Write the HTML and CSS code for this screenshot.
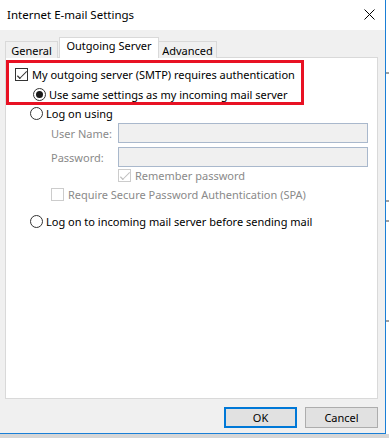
FILE: index.html
```html
<!DOCTYPE html>
<html lang="en">
  <head>
    <meta charset="UTF-8" />
    <title>Internet E-mail Settings</title>
    <link rel="stylesheet" href="styles.css">
  </head>
  <body>
    <div class="screen">
      <div class="dialog">
        <div class="titlebar">
          <span class="title">Internet E-mail Settings</span>
          <svg class="close" width="11" height="11" viewBox="0 0 11 11">
            <path d="M0.5 0.5 L10.5 10.5 M10.5 0.5 L0.5 10.5" stroke="#000" stroke-width="1" fill="none" />
          </svg>
        </div>

        <div class="tabs">
          <div class="tab tab-general">General</div>
          <div class="tab tab-outgoing active">Outgoing Server</div>
          <div class="tab tab-advanced">Advanced</div>
        </div>

        <div class="panel">
          <div class="highlight">
            <div class="row">
              <span class="check checked"></span>
              <span>My outgoing server (SMTP) requires authentication</span>
            </div>
            <div class="row sub">
              <span class="radio on"></span>
              <span>Use same settings as my incoming mail server</span>
            </div>
          </div>

          <div class="row sub logon">
            <span class="radio"></span>
            <span>Log on using</span>
          </div>

          <div class="field">
            <span class="field-label">User Name:</span>
            <input type="text" class="field-input" disabled />
          </div>
          <div class="field">
            <span class="field-label">Password:</span>
            <input type="password" class="field-input" disabled />
          </div>

          <div class="row disabled remember">
            <span class="check checked off"></span>
            <span>Remember password</span>
          </div>
          <div class="row disabled spa">
            <span class="check off"></span>
            <span>Require Secure Password Authentication (SPA)</span>
          </div>

          <div class="row sub before">
            <span class="radio"></span>
            <span>Log on to incoming mail server before sending mail</span>
          </div>
        </div>

        <div class="actions">
          <button class="btn btn-default">OK</button>
          <button class="btn">Cancel</button>
        </div>
      </div>
      <div class="behind">
        <span class="mark m1"></span>
        <span class="mark m2"></span>
        <span class="mark m3"></span>
        <span class="mark m4"></span>
      </div>
    </div>
  </body>
</html>
```

FILE: styles.css
```css
body {
  margin: 0;
  padding: 0;
  font-family: "Noto Sans", "Open Sans", sans-serif;
  font-size: 11px;
  color: #000;
  background-color: #d6d6d6;
}

.screen {
  display: flex;
  width: 389px;
  height: 438px;
  overflow: hidden;
}

.dialog {
  width: 385px;
  height: 433px;
  background-color: #f0f0f0;
  border-right: 1px solid #1a7fd6;
  border-bottom: 1px solid #1a7fd6;
  flex-shrink: 0;
}

.behind {
  flex: 1;
  height: 434px;
  background-color: #fff;
  display: flex;
  flex-direction: column;
}

.mark {
  display: block;
  height: 2px;
  background-color: #a0a0a0;
}

.m1 { margin-top: 72px; }
.m2 { margin-top: 126px; }
.m3 { margin-top: 18px; }
.m4 { margin-top: 98px; }

/* title bar */
.titlebar {
  height: 30px;
  background-color: #fff;
  display: flex;
  align-items: center;
  justify-content: space-between;
  padding: 0 10px 0 7px;
}

.title {
  font-size: 11.5px;
  margin-top: -1px;
}

.close {
  margin-top: -1px;
}

/* tabs */
.tabs {
  display: flex;
  align-items: flex-end;
  margin: 7px 0 -1px 5px;
  height: 21px;
}

.tab {
  height: 16px;
  line-height: 17px;
  background-color: #f0f0f0;
  border: 1px solid #d9d9d9;
  border-bottom: none;
  box-sizing: content-box;
  text-align: center;
}

.tab-general {
  width: 51px;
}

.tab-outgoing {
  width: 98px;
}

.tab-advanced {
  width: 57px;
  margin-left: -1px;
}

.tab.active {
  height: 20px;
  line-height: 16px;
  background-color: #fff;
  position: relative;
  z-index: 1;
  margin-left: 1px;
}

/* panel */
.panel {
  margin-left: 5px;
  width: 371px;
  height: 338px;
  background-color: #fff;
  border: 1px solid #d9d9d9;
  padding-top: 2px;
  box-sizing: content-box;
}

.highlight {
  width: 292px;
  height: 38px;
  border: 3px solid #e81123;
  padding-top: 1px;
}

.row {
  display: flex;
  align-items: center;
  height: 20px;
  white-space: nowrap;
  padding-left: 6px;
}

.row.sub {
  padding-left: 24px;
}

.row.disabled {
  color: #8a8a8a;
}

.logon {
  height: 17px;
}

.check {
  width: 11px;
  height: 11px;
  border: 1px solid #333;
  background-color: #fff;
  margin-right: 4px;
  position: relative;
  flex-shrink: 0;
}

.check.checked::after {
  content: "";
  position: absolute;
  left: 1px;
  top: 1px;
  width: 7px;
  height: 3px;
  border-left: 1px solid #333;
  border-bottom: 1px solid #333;
  transform: translate(1px, 2px) rotate(-45deg) scaleX(1.3);
}

.check.off {
  border-color: #cccccc;
}

.check.off::after {
  border-color: #bfbfbf;
}

.radio {
  width: 11px;
  height: 11px;
  border: 1px solid #333;
  border-radius: 50%;
  background-color: #fff;
  margin-right: 3px;
  display: flex;
  align-items: center;
  justify-content: center;
  flex-shrink: 0;
}

.radio.on::after {
  content: "";
  width: 7px;
  height: 7px;
  border-radius: 50%;
  background-color: #1a1a1a;
}

/* credential fields */
.field {
  display: flex;
  align-items: center;
  padding-left: 45px;
  height: 20px;
  margin-top: 1px;
}

.field + .field {
  margin-top: 4px;
}

.field-label {
  width: 67px;
  color: #8a8a8a;
}

.field-input {
  width: 250px;
  height: 20px;
  box-sizing: border-box;
  border: 1px solid #a9b8cc;
  background-color: #f0f0f0;
  margin: 0;
  padding: 0;
}

.remember {
  padding-left: 112px;
  margin-top: -2px;
}

.spa {
  padding-left: 45px;
  margin-top: -1px;
}

.before {
  margin-top: 7px;
}

/* buttons */
.actions {
  display: flex;
  justify-content: flex-end;
  gap: 8px;
  padding: 8px 7px 0 0;
}

.btn {
  width: 73px;
  height: 21px;
  font-family: "Noto Sans", "Open Sans", sans-serif;
  font-size: 11px;
  color: #000;
  background-color: #e1e1e1;
  border: 1px solid #adadad;
  padding: 0;
  line-height: 17px;
}

.btn-default {
  border: 2px solid #0078d7;
}
```
